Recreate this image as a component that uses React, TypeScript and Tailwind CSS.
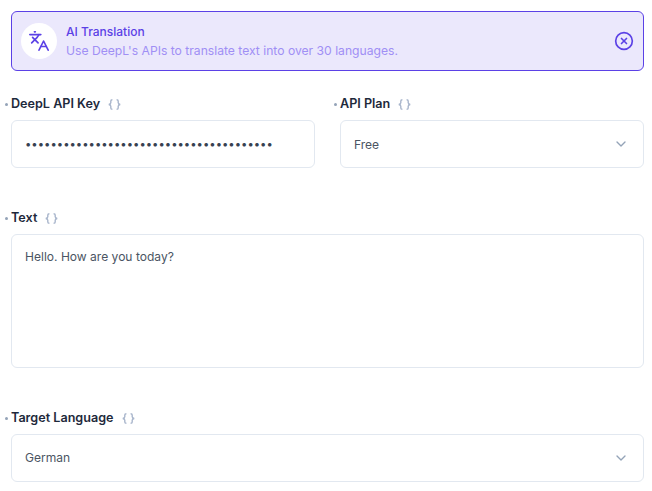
import { ChevronDown, CircleX, Languages } from "lucide-react";

const Braces = () => (
  <svg width="13" height="11" viewBox="0 0 13 11" fill="none" stroke="#a9b6cc" strokeWidth="1.4" className="ml-2">
    <path d="M4.4 .8C3.2 .8 2.8 1.2 2.8 2V3.8C2.8 4.6 2.2 5.2 .8 5.5C2.2 5.8 2.8 6.4 2.8 7.2V9C2.8 9.8 3.2 10.2 4.4 10.2" />
    <path d="M8.6 .8C9.8 .8 10.2 1.2 10.2 2V3.8C10.2 4.6 10.8 5.2 12.2 5.5C10.8 5.8 10.2 6.4 10.2 7.2V9C10.2 9.8 9.8 10.2 8.6 10.2" />
  </svg>
);

const Label = ({ text }: { text: string }) => (
  <div className="relative flex h-[18px] items-center">
    <span className="absolute left-[-6px] top-[8px] h-[3px] w-[3px] rounded-full bg-[#94a3b8]" />
    <span className="text-[12.6px] font-semibold text-[#1e293b]">{text}</span>
    <Braces />
  </div>
);

const Select = ({ value, nudge }: { value: string; nudge?: boolean }) => (
  <div className="mt-[7px] flex h-12 items-center justify-between rounded-md border border-[#e2e8f0] bg-white pl-[13px] pr-[14px]">
    <span className={`text-[12.05px] leading-[18px] text-[#4b5563] ${nudge ? "pt-px" : ""}`}>{value}</span>
    <ChevronDown size={16} className="text-[#94a3b8]" />
  </div>
);

export default function App() {
  return (
    <div className="h-[491px] w-[652px] overflow-hidden bg-white pl-[11px] pr-2 pt-[11px] font-['Inter',sans-serif]">
      <div className="flex h-[60px] items-center rounded-md border border-[#5b41e6] bg-[#ebe8fc] pl-[9px] pr-[9px]">
        <div className="flex h-9 w-9 items-center justify-center rounded-full bg-white">
          <Languages size={22} className="text-[#5b41e6]" strokeWidth={1.8} />
        </div>
        <div className="ml-[9px] flex-1">
          <div className="text-xs font-medium leading-[19px] text-[#5b41e6]">AI Translation</div>
          <div className="text-[12.15px] leading-[19px] text-[#a08ff5]">Use DeepL's APIs to translate text into over 30 languages.</div>
        </div>
        <CircleX size={20} className="text-[#5b41e6]" strokeWidth={2} />
      </div>

      <div className="mt-6 flex gap-[25px]">
        <div className="w-[304px]">
          <Label text="DeepL API Key" />
          <div className="mt-[7px] flex h-12 items-center rounded-md border border-[#e2e8f0] bg-white px-[13px]">
            <input
              type="password"
              readOnly
              value="012345678901234567890123456789012345678"
              className="w-full text-[11.3px] text-[#374151] outline-none"
            />
          </div>
        </div>
        <div className="w-[304px]">
          <Label text="API Plan" />
          <Select value="Free" nudge />
        </div>
      </div>

      <div className="mt-[41px]">
        <Label text="Text" />
        <div className="mt-[7px] h-[134px] rounded-md border border-[#e2e8f0] bg-white px-[13px] pt-[13px] text-[12.05px] leading-[18px] text-[#4b5563]">
          Hello. How are you today?
        </div>
      </div>

      <div className="mt-[41px]">
        <Label text="Target Language" />
        <Select value="German" />
      </div>
    </div>
  );
}
